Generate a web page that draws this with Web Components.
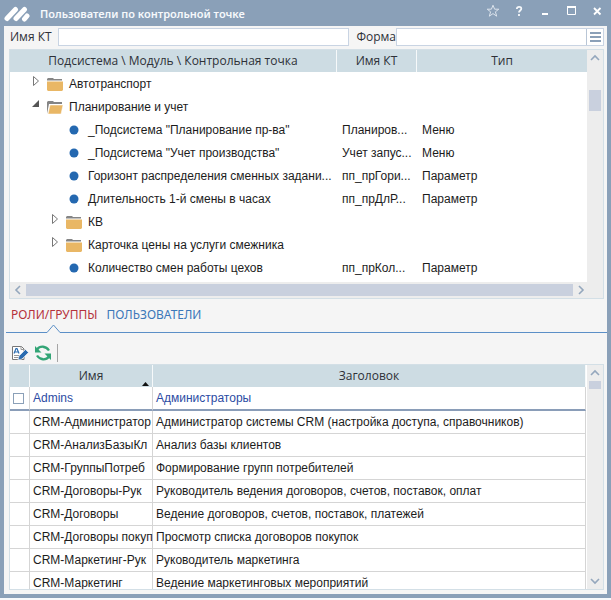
<!DOCTYPE html>
<html lang="ru">
<head>
<meta charset="utf-8">
<title>Пользователи по контрольной точке</title>
<style>
  body { margin: 0; background: #f7f9fb; }
</style>
</head>
<body>
<app-window></app-window>

<script>
const icons = {
  star: '<svg width="14" height="14" viewBox="0 0 14 14" fill="none" stroke="#dbe3ec"><path d="M7 1.2l1.6 4h4.2L9.4 7.8l1.3 4.4L7 9.6l-3.7 2.6 1.3-4.4L1.2 5.2h4.2z"/></svg>',
  help: '<svg width="14" height="14" viewBox="0 0 14 14" fill="none" stroke="#f4f7fa" stroke-width="1.8"><path d="M4.8 5c.2-3 4.6-2.8 4.500-.2 0 1.700-2.300 1.700-2.300 3.700M7 9.900v2"/></svg>',
  min: '<svg width="14" height="14" viewBox="0 0 14 14"><path d="M4 9h6v2H4z" fill="#fff"/></svg>',
  max: '<svg width="14" height="14" viewBox="0 0 14 14" fill="none" stroke="#fff"><path d="M3.5 3.5h8v7h-8z"/><path d="M3 3h9" stroke-width="2"/></svg>',
  close: '<svg width="14" height="14" viewBox="0 0 14 14" stroke="#fff" stroke-width="1.8"><path d="M4 4l6.5 6.5M10.5 4L4 10.500"/></svg>',
  folder: '<svg width="16" height="16" viewBox="0 -1 16 16"><path d="M0 3V2l1-1h5l1 1h8v2H0z" fill="#858585"/><path d="M0 3.5h16V14H1l-1-1z" fill="#fff"/><path d="M0 4.5h16V13l-1 1H1l-1-1z" fill="#e9b765"/></svg>',
  folderOpen: '<svg width="16" height="16" viewBox="0 -1 16 16"><path d="M0 14V2l1-1h5l1 1h8v2H2z" fill="#858585"/><path d="M3 5h13l-2 9H1z" fill="#e9b765" stroke="#fff" stroke-width=".5"/></svg>',
  dot: '<svg width="10" height="10" viewBox="0 0 10 10"><circle cx="5" cy="5" r="4.5" fill="#2468b0"/></svg>',
  closed: '<svg width="8" height="12" viewBox="0 0 8 12" fill="#fff" stroke="#777"><path d="M1.5 1.5v9l5-4.500z"/></svg>',
  opened: '<svg width="8" height="12" viewBox="0 0 8 12"><path d="M7 2v7H0z" fill="#555"/></svg>',
  edit: '<svg width="18" height="18" viewBox="0 0 18 18"><path d="M1.5 2.5h9l2.500 2.500v10.500h-11.500z" fill="#fff" stroke="#777"/><path d="M10 2v3.500h3M3 13.500h5M3 11.500h6" fill="none" stroke="#999"/><path d="M3 9.500l2-5h1l2 5M4 8h3" fill="none" stroke="#2b6cb0" stroke-width="1.200"/><path d="M14.500 5.500l3 3-6.500 6.500-4 1 1-4z" fill="#2b6cb0" stroke="#fff" stroke-width=".6"/></svg>',
  refresh: '<svg width="18" height="18" viewBox="0 0 18 18" fill="none" stroke="#33a576" stroke-width="2.3"><path d="M3 5.500C6 1.500 12 1.800 15 6.500M15 12.500C12 16.500 6 16.200 3 11.500"/><path d="M1 2v6.500h6.500zM17 16V9.500h-6.500z" fill="#33a576" stroke="none"/></svg>',
  list: '<svg width="12" height="13" viewBox="0 0 12 13"><path d="M1 1h11v2H1zM1 5h11v2H1zM1 9h11v2H1z" fill="#8ba0b8"/></svg>'
};

// Title bar with the window controls
class TitleBar extends HTMLElement {
  constructor() {
    super();
    this.attachShadow({ mode: 'open' });
  }

  connectedCallback() {
    this.shadowRoot.innerHTML = `
      <style>
        :host {
          display: flex;
          align-items: center;
          height: 26px;
          padding: 0 7px 0 4px;
          color: #f6f9fc;
          font: 600 11px/20px "Noto Sans", sans-serif;
        }
        .logo { flex: none; margin-right: 10px; }
        h1 { flex: 1; margin: 0; font: inherit; white-space: nowrap; padding-top: 2px; }
        .buttons { display: flex; gap: 12px; padding-bottom: 4px; }
        button { display: flex; border: 0; padding: 0; background: none; }
      </style>
      <svg class="logo" width="26" height="18" viewBox="0 0 26 18" stroke="#fff" stroke-linecap="round" fill="none">
        <path d="M3 14.500L11.500 5.500" stroke-width="5"/>
        <path d="M12 14.500L20.500 5.500" stroke-width="5"/>
        <path d="M20.500 15l2.500-3" stroke-width="5"/>
      </svg>
      <h1><slot></slot></h1>
      <div class="buttons">
        <button aria-label="Избранное">${icons.star}</button>
        <button aria-label="Справка">${icons.help}</button>
        <button aria-label="Свернуть">${icons.min}</button>
        <button aria-label="Развернуть">${icons.max}</button>
        <button aria-label="Закрыть">${icons.close}</button>
      </div>
    `;
  }
}

// Labelled text box; the "menu" attribute adds a button at its end
class FilterField extends HTMLElement {
  constructor() {
    super();
    this.attachShadow({ mode: 'open' });
  }

  connectedCallback() {
    const menu = this.hasAttribute('menu')
      ? `<button aria-label="Выбрать">${icons.list}</button>`
      : '';
    this.shadowRoot.innerHTML = `
      <style>
        :host { display: flex; align-items: center; gap: var(--label-gap, 6px); min-width: 0; }
        label { flex: none; font: 12px/18px "Open Sans", sans-serif; color: #2e3138; }
        .box {
          display: flex;
          flex: 1;
          min-width: 0;
          height: 16px;
          border: 1px solid #c9d4e3;
          background: #fff;
        }
        input { flex: 1; min-width: 0; border: 0; padding: 0 4px; background: none; outline: 0; font: 12px "Open Sans", sans-serif; }
        button { display: flex; align-items: center; border: 0; border-left: 1px solid #b9c6d6; padding: 0 2px; background: none; }
      </style>
      <label for="field"><slot></slot></label>
      <div class="box"><input id="field" type="text">${menu}</div>
    `;
  }
}

// Scroll bar: start and size give the place of the thumb in percent,
// "endless" leaves out the second arrow
class ScrollTrack extends HTMLElement {
  constructor() {
    super();
    this.attachShadow({ mode: 'open' });
  }

  connectedCallback() {
    const start = Number(this.getAttribute('start'));
    const size = Number(this.getAttribute('size'));
    const horizontal = this.hasAttribute('horizontal');
    const prev = horizontal ? 'M8 2L4 6l4 4' : 'M2 8l4-4 4 4';
    const next = horizontal ? 'M4 2l4 4-4 4' : 'M2 4l4 4 4-4';
    const arrow = d => `<svg width="12" height="12" viewBox="0 0 12 12" fill="none" stroke="#94a7bd" stroke-width="1.6"><path d="${d}"/></svg>`;
    const last = this.hasAttribute('endless')
      ? ''
      : `<button aria-label="Вперёд">${arrow(next)}</button>`;
    this.shadowRoot.innerHTML = `
      <style>
        :host {
          display: flex;
          flex-direction: ${horizontal ? 'row' : 'column'};
          align-items: stretch;
          flex: none;
          background: #ededed;
        }
        button {
          display: flex;
          align-items: center;
          justify-content: center;
          flex: none;
          border: 0;
          padding: 0;
          width: 16px;
          height: 16px;
          background: none;
        }
        .track { display: flex; flex-direction: inherit; flex: 1; min-width: 0; min-height: 0; }
        :host(:not([horizontal])) .track { width: 16px; }
        .before { flex: ${start}; }
        .thumb { flex: ${size}; margin: ${horizontal ? '2px 0' : '0 2px'}; background: #c9d0de; }
        .after { flex: ${100 - start - size}; }
      </style>
      <button aria-label="Назад">${arrow(prev)}</button>
      <div class="track"><div class="before"></div><div class="thumb"></div><div class="after"></div></div>
      ${last}
    `;
  }
}

class ControlTree extends HTMLElement {
  constructor() {
    super();
    this.attachShadow({ mode: 'open' });
    this.rows = [
      { level: 0, icon: 'closed', title: 'Автотранспорт' },
      { level: 0, icon: 'opened', title: 'Планирование и учет' },
      { level: 1, icon: 'dot', title: '_Подсистема "Планирование пр-ва"', name: 'Планиров...', type: 'Меню' },
      { level: 1, icon: 'dot', title: '_Подсистема "Учет производства"', name: 'Учет запус...', type: 'Меню' },
      { level: 1, icon: 'dot', title: 'Горизонт распределения сменных задани...', name: 'пп_прГори...', type: 'Параметр' },
      { level: 1, icon: 'dot', title: 'Длительность 1-й смены в часах', name: 'пп_прДлР...', type: 'Параметр' },
      { level: 1, icon: 'closed', title: 'КВ' },
      { level: 1, icon: 'closed', title: 'Карточка цены на услуги смежника' },
      { level: 1, icon: 'dot', title: 'Количество смен работы цехов', name: 'пп_прКол...', type: 'Параметр' }
    ];
  }

  connectedCallback() {
    this.render();
  }

  renderIcons(icon) {
    if (icon === 'dot') {
      return `<span class="arrow"></span><span class="icon">${icons.dot}</span>`;
    }
    const folder = icon === 'opened' ? icons.folderOpen : icons.folder;
    return `<span class="arrow">${icons[icon]}</span><span class="icon">${folder}</span>`;
  }

  render() {
    const body = this.rows.map(row => `
      <tr>
        <td><div class="node level${row.level}">${this.renderIcons(row.icon)}<span>${row.title}</span></div></td>
        <td>${row.name || ''}</td>
        <td>${row.type || ''}</td>
      </tr>`).join('');
    this.shadowRoot.innerHTML = `
      <style>
        :host { display: block; border: 1px solid #d3dfe6; background: #fff; }
        .main { display: flex; }
        .view { flex: 1; min-width: 0; padding-bottom: 3px; }
        table { width: 100%; table-layout: fixed; border-collapse: separate; border-spacing: 0; }
        th {
          height: 22px;
          padding: 0;
          background: #cddce3;
          border-right: 1px solid #f6f9fa;
          box-sizing: border-box;
          font: 12px/20px "Open Sans", sans-serif;
          color: #2e3138;
        }
        th:last-child { border-right: 0; }
        td {
          height: 23px;
          padding: 0 0 0 5px;
          font: 12px/16px "Liberation Sans", sans-serif;
          color: #1c1c1c;
          white-space: nowrap;
        }
        td:first-child { padding: 0; }
        .node { display: flex; align-items: center; }
        .level0 { padding-left: 22px; }
        .level1 { padding-left: 41px; }
        .arrow { display: flex; width: 15px; padding-bottom: 6px; }
        .icon { display: flex; justify-content: center; width: 16px; margin-right: 6px; }
        .c1 { width: 327px; }
        .c2 { width: 80px; }
        scroll-track[horizontal] { padding-right: 14px; }
      </style>
      <div class="main">
        <div class="view">
          <table>
            <colgroup><col class="c1"><col class="c2"><col></colgroup>
            <thead><tr><th>Подсистема \\ Модуль \\ Контрольная точка</th><th>Имя КТ</th><th>Тип</th></tr></thead>
            <tbody>${body}</tbody>
          </table>
        </div>
        <scroll-track endless start="11" size="10"></scroll-track>
      </div>
      <scroll-track horizontal start="0" size="100"></scroll-track>
    `;
  }
}

class TabStrip extends HTMLElement {
  constructor() {
    super();
    this.attachShadow({ mode: 'open' });
  }

  connectedCallback() {
    this.shadowRoot.innerHTML = `
      <style>
        :host { display: flex; gap: 9px; padding: 0 5px; border-bottom: 1px solid #5b8fc7; margin-left: 2px; }
        button {
          position: relative;
          height: 33px;
          border: 0;
          padding: 0 0 2px;
          background: none;
          font: 12px/20px "Noto Sans", sans-serif;
          color: #3c78b9;
        }
        button[aria-selected=true] { color: #b5323c; }
        .notch { position: absolute; left: 50%; bottom: -1px; margin-left: -9px; }
      </style>
      <button role="tab" aria-selected="true">РОЛИ/ГРУППЫ
        <svg class="notch" width="18" height="9" viewBox="0 0 18 9"><path d="M2 8.5L8.5 1l6.500 7.500V9H2z" fill="#f5f5f5"/><path d="M0 8.5h2L8.5 1 15 8.500h3" fill="none" stroke="#5b8fc7"/></svg>
      </button>
      <button role="tab" aria-selected="false">ПОЛЬЗОВАТЕЛИ</button>
    `;
  }
}

class ToolStrip extends HTMLElement {
  constructor() {
    super();
    this.attachShadow({ mode: 'open' });
  }

  connectedCallback() {
    this.shadowRoot.innerHTML = `
      <style>
        :host { display: flex; align-items: center; gap: 5px; height: 20px; padding: 10px 7px 1px; }
        button { display: flex; border: 0; padding: 0; background: none; }
        hr { width: 1px; height: 18px; margin: 0; border: 0; background: #a5a5a5; }
      </style>
      <button aria-label="Изменить">${icons.edit}</button>
      <button aria-label="Обновить">${icons.refresh}</button>
      <hr>
    `;
  }
}

class RoleTable extends HTMLElement {
  constructor() {
    super();
    this.attachShadow({ mode: 'open' });
    this.roles = [
      ['Admins', 'Администраторы'],
      ['CRM-Администратор', 'Администратор системы CRM (настройка доступа, справочников)'],
      ['CRM-АнализБазыКл', 'Анализ базы клиентов'],
      ['CRM-ГруппыПотреб', 'Формирование групп потребителей'],
      ['CRM-Договоры-Рук', 'Руководитель ведения договоров, счетов, поставок, оплат'],
      ['CRM-Договоры', 'Ведение договоров, счетов, поставок, платежей'],
      ['CRM-Договоры покуп', 'Просмотр списка договоров покупок'],
      ['CRM-Маркетинг-Рук', 'Руководитель маркетинга'],
      ['CRM-Маркетинг', 'Ведение маркетинговых мероприятий']
    ];
  }

  connectedCallback() {
    this.render();
  }

  render() {
    const body = this.roles.map(([name, title], i) => `
      <tr class="${i === 0 ? 'current' : ''}">
        <td>${i === 0 ? '<input type="checkbox" aria-label="Выбрать Admins">' : ''}</td>
        <td>${name}</td>
        <td>${title}</td>
      </tr>`).join('');
    this.shadowRoot.innerHTML = `
      <style>
        :host { display: flex; overflow: hidden; border: 1px solid #d3dfe6; background: #fff; }
        .view { flex: 1; min-width: 0; overflow: hidden; }
        table { width: 100%; table-layout: fixed; border-collapse: separate; border-spacing: 0; }
        th, td { box-sizing: border-box; border-right: 1px solid #d5d5d5; }
        th {
          position: relative;
          height: 22px;
          padding: 0;
          background: #cddce3;
          border-right-color: #f6f9fa;
          font: 12px/20px "Open Sans", sans-serif;
          color: #2e3138;
        }
        .sort { position: absolute; right: 3px; bottom: 1px; }
        td {
          height: 23px;
          padding: 0 0 0 3px;
          border-bottom: 1px solid #d5d5d5;
          font: 12px/16px "Liberation Sans", sans-serif;
          color: #1c1c1c;
          white-space: nowrap;
        }
        .current td { height: 24px; color: #2c4ba3; border-bottom: 2px solid #8a9db8; }
        input {
          display: block;
          appearance: none;
          box-sizing: border-box;
          width: 11px;
          height: 11px;
          margin: 0;
          border: 1px solid #8ba0b8;
          background: #fff;
        }
        .c1 { width: 20px; }
        .c2 { width: 123px; }
        scroll-track { margin-left: 1px; }
      </style>
      <div class="view">
        <table>
          <colgroup><col class="c1"><col class="c2"><col></colgroup>
          <thead><tr>
            <th></th>
            <th>Имя<svg class="sort" width="7" height="4" viewBox="0 0 7 4"><path d="M0 4l3.500-4L7 4z" fill="#111"/></svg></th>
            <th>Заголовок</th>
          </tr></thead>
          <tbody>${body}</tbody>
        </table>
      </div>
      <scroll-track start="0" size="4"></scroll-track>
    `;
  }
}

class AppWindow extends HTMLElement {
  constructor() {
    super();
    this.attachShadow({ mode: 'open' });
  }

  connectedCallback() {
    this.shadowRoot.innerHTML = `
      <style>
        :host {
          display: flex;
          flex-direction: column;
          box-sizing: border-box;
          height: calc(100vh - 2px);
          background: #8aa0b8;
        }
        main {
          display: flex;
          flex-direction: column;
          flex: 1;
          min-height: 0;
          margin: 0 4px 4px;
          background: #f5f5f5;
        }
        .filters { display: flex; gap: 7px; padding: 2px 3px 3px 6px; }
        .name { flex: 340; }
        .form { flex: 248; --label-gap: 0; }
        control-tree { margin: 0 3px 0 5px; }
        role-table { flex: 1; min-height: 0; margin: 0 3px 4px 5px; }
      </style>
      <title-bar>Пользователи по контрольной точке</title-bar>
      <main>
        <div class="filters">
          <filter-field class="name">Имя КТ</filter-field>
          <filter-field class="form" menu>Форма</filter-field>
        </div>
        <control-tree></control-tree>
        <tab-strip role="tablist"></tab-strip>
        <tool-strip></tool-strip>
        <role-table></role-table>
      </main>
    `;
  }
}

customElements.define('title-bar', TitleBar);
customElements.define('filter-field', FilterField);
customElements.define('scroll-track', ScrollTrack);
customElements.define('control-tree', ControlTree);
customElements.define('tab-strip', TabStrip);
customElements.define('tool-strip', ToolStrip);
customElements.define('role-table', RoleTable);
customElements.define('app-window', AppWindow);
</script>
</body>
</html>
